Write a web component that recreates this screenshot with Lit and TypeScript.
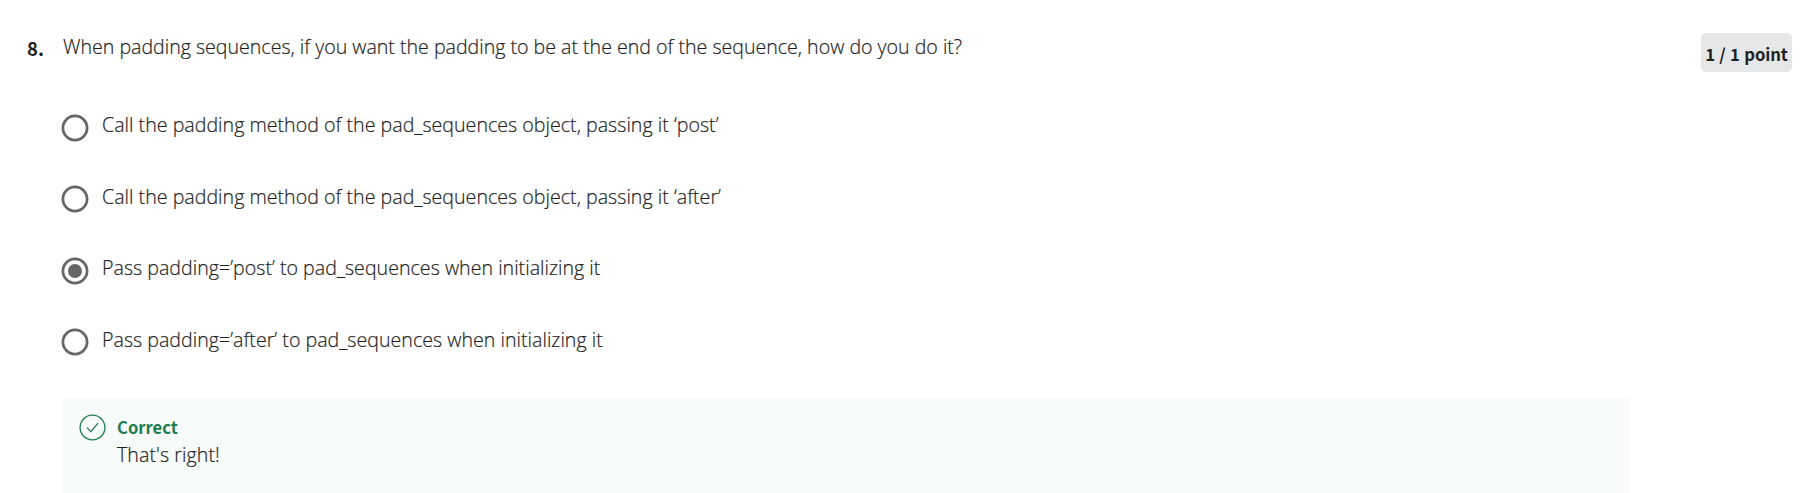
import { LitElement, html, css, svg, nothing } from "lit";
import { customElement, property } from "lit/decorators.js";

@customElement("radio-option")
class RadioOption extends LitElement {
  @property() label = "";
  @property({ type: Boolean }) checked = false;
  static styles = css`
    :host { display: flex; height: 71.6px; }
    .mark { width: 28px; height: 28px; margin-top: 2.6px; flex: none; }
    .label { margin-left: 13px; line-height: 27px; white-space: nowrap; letter-spacing: 0.02px; }
  `;
  render() {
    return html`<svg class="mark" viewBox="0 0 28 28">
        <circle cx="14" cy="14" r="12.1" fill="none" stroke="#666" stroke-width="2.7" />
        ${this.checked ? svg`<circle cx="14" cy="14" r="7" fill="#666" />` : nothing}
      </svg>
      <span class="label">${this.label}</span>`;
  }
}

@customElement("app-root")
class AppRoot extends LitElement {
  static styles = css`
    :host { display: block; height: 493px; overflow: hidden; background: #fff; color: #1f1f1f;
      font-family: "Open Sans", sans-serif; font-size: 19.6px; font-weight: 300; -webkit-text-stroke: 0.2px #1f1f1f; }
    .head { display: flex; padding: 33px 14px 0 27px; height: 79px; box-sizing: border-box; }
    .num, .points, .verdict { font-family: "Noto Sans CJK SC", sans-serif; font-weight: 700; -webkit-text-stroke: 0; }
    .num { width: 36px; font-size: 18.5px; line-height: 31px; }
    .question { flex: 1; line-height: 27px; white-space: nowrap; letter-spacing: -0.01px; }
    .points { width: 91px; height: 39px; border-radius: 5px; background: #e5e7e8; text-align: center;
      font-size: 16.7px; line-height: 42px; white-space: nowrap; word-spacing: 0.7px; letter-spacing: -0.1px; }
    .options { padding: 32px 0 0 61px; height: 287px; }
    .feedback { display: flex; margin-left: 63px; width: 1566px; height: 95px; background: #f7fbf9;
      padding: 16px 0 0 16px; box-sizing: border-box; }
    .check { width: 27px; height: 27px; flex: none; }
    .copy { margin-left: 11px; }
    .verdict { color: #1d7c50; font-size: 16.6px; line-height: 27px; }
    .note { line-height: 27px; letter-spacing: 0.08px; }
  `;
  private options = [
    "Call the padding method of the pad_sequences object, passing it ‘post’",
    "Call the padding method of the pad_sequences object, passing it ‘after’",
    "Pass padding=’post’ to pad_sequences when initializing it",
    "Pass padding=’after’ to pad_sequences when initializing it",
  ];
  render() {
    return html`
      <div class="head">
        <div class="num">8.</div>
        <div class="question"><span>When padding sequences, if you want the padding to be at the end of the sequence, how do you do it?</span></div>
        <div class="points">1 / 1 point</div>
      </div>
      <div class="options">
        ${this.options.map((o, i) => html`<radio-option .label=${o} .checked=${i === 2}></radio-option>`)}
      </div>
      <div class="feedback">
        <svg class="check" viewBox="0 0 27 27" fill="none" stroke="#1d7c50" stroke-width="1.3">
          <circle cx="13.5" cy="13.5" r="12.4" />
          <path d="M8 13.6 L11.8 17.6 L19 9.2" />
        </svg>
        <div class="copy"><div class="verdict">Correct</div><div class="note">That's right!</div></div>
      </div>`;
  }
}
